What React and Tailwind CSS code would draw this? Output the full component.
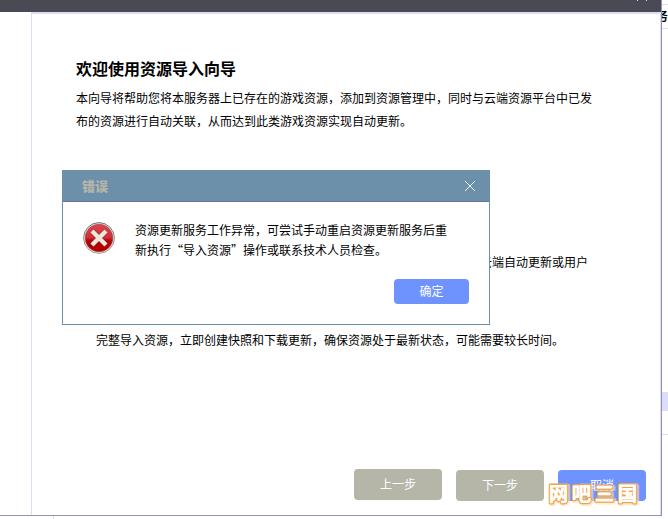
function TitleBar() {
    return (
        <div className="flex h-3 shrink-0 justify-end bg-[#4a4a55] pr-[13px]">
            <svg width="12" height="1" viewBox="0 0 12 1">
                <path d="M1 0h1v1H1zM10 0h1v1H10z" fill="#dcdcff"/>
            </svg>
        </div>
    );
}

function ErrorIcon() {
    return (
        <svg width="34" height="34" viewBox="0 0 34 34" className="shrink-0">
            <defs>
                <linearGradient id="error-fill" x1="0" y1="0" x2="0" y2="1">
                    <stop offset="0" stopColor="#d8464e"/>
                    <stop offset="0.48" stopColor="#cf2f38"/>
                    <stop offset="0.6" stopColor="#b80007"/>
                    <stop offset="1" stopColor="#b00000"/>
                </linearGradient>
                <linearGradient id="error-rim" x1="0" y1="0" x2="0" y2="1">
                    <stop offset="0" stopColor="#77716c"/>
                    <stop offset="1" stopColor="#b09c9a"/>
                </linearGradient>
            </defs>
            <circle cx="17" cy="17" r="15.4" fill="#e9e4e1" stroke="url(#error-rim)" strokeWidth="1"/>
            <circle cx="17" cy="17" r="13.8" fill="url(#error-fill)" stroke="#9c4040" strokeWidth="0.6"/>
            <path d="M10 10l14 14M24 10L10 24" stroke="#8e1515" strokeOpacity="0.6" strokeWidth="5.6"/>
            <path d="M10 10l14 14M24 10L10 24" stroke="#ece8dc" strokeWidth="4.4"/>
        </svg>
    );
}

function ErrorDialog() {
    return (
        <div className="absolute left-[62px] top-[170px] flex h-[155px] w-[428px] flex-col border border-[#6c90aa] bg-white">
            <div className="flex h-[31px] shrink-0 items-center justify-between border-b border-[#6a70a8] bg-[#6c90aa] pl-[19px] pr-[13px]">
                <h2 className="text-[13px] font-black leading-4 text-[#b5b5a8]">错误</h2>
                <svg width="12" height="12" viewBox="0 0 12 12">
                    <path d="M1 1l10 10M11 1L1 11" stroke="#fff" strokeWidth="0.9"/>
                </svg>
            </div>
            <div className="flex gap-[19px] pl-[19px] pt-[19px]">
                <ErrorIcon/>
                <p className="-mt-px whitespace-nowrap leading-5">
                    资源更新服务工作异常，可尝试手动重启资源更新服务后重<br/>
                    新执行“导入资源”操作或联系技术人员检查。
                </p>
            </div>
            <button className="mb-5 ml-auto mr-5 mt-auto h-[25px] w-[75px] rounded bg-[#6e93ff] pb-px text-white">
                确定
            </button>
        </div>
    );
}

function Watermark() {
    return (
        <svg width="100" height="32" viewBox="0 0 100 32" className="absolute left-[544px] top-[479px]">
            <g
                fontFamily='"Noto Sans CJK SC", sans-serif'
                fontSize="19"
                fontWeight="500"
                letterSpacing="4"
                strokeLinejoin="round"
            >
                <text x="6" y="23" fill="none" stroke="#ffe0b0" strokeOpacity="0.6" strokeWidth="5">网吧三国</text>
                <text x="5" y="22" fill="#fff" stroke="#eda54b" strokeWidth="3.4" paintOrder="stroke">网吧三国</text>
                <text x="5" y="22" fill="#fff" stroke="#fff" strokeWidth="0.8">网吧三国</text>
            </g>
        </svg>
    );
}

function Wizard() {
    return (
        <div className="flex h-[516px] w-[662px] shrink-0 flex-col border-b border-r border-[#9490b0]">
            <TitleBar/>
            <div className="flex grow">
                <div className="w-[31px] shrink-0"/>
                <main className="flex grow flex-col border-l border-r border-t-2 border-[#dcdcfb] pl-11 pt-[42px]">
                    <h1 className="text-base font-bold leading-6">欢迎使用资源导入向导</h1>
                    <p className="mt-[6px] whitespace-nowrap leading-[23px]">
                        本向导将帮助您将本服务器上已存在的游戏资源，添加到资源管理中，同时与云端资源平台中已发<br/>
                        布的资源进行自动关联，从而达到此类游戏资源实现自动更新。
                    </p>
                    <p className="mr-[72px] mt-[118px] text-right leading-[23px]">云端自动更新或用户</p>
                    <p className="ml-5 mt-[55px] whitespace-nowrap leading-[23px]">
                        完整导入资源，立即创建快照和下载更新，确保资源处于最新状态，可能需要较长时间。
                    </p>
                    <div className="mb-[14px] mr-[14px] mt-auto flex justify-end gap-[14px] text-white">
                        <button className="-mt-px mb-px h-[31px] w-[88px] rounded bg-[#b5b5a8] pb-px">上一步</button>
                        <button className="h-[31px] w-[88px] rounded bg-[#b5b5a8] pb-px">下一步</button>
                        <button className="h-[31px] w-[88px] rounded bg-[#6e93ff] pb-px">取消</button>
                    </div>
                </main>
            </div>
        </div>
    );
}

export default function App() {
    return (
        <div className='relative flex h-[519px] w-[668px] flex-col overflow-hidden bg-white font-["Noto_Sans_CJK_SC",sans-serif] text-xs text-black'>
            <div className="flex">
                <Wizard/>
                <aside className="w-[6px] overflow-hidden pt-1">
                    <div className="h-[25px] border-y border-[#dcdcfb]">
                        <span className="-ml-[6px] block w-3 font-bold leading-[22px]">务</span>
                    </div>
                    <div className="mt-[363px] h-[19px] bg-[#dcdcfb]"/>
                    <div className="mt-[23px] h-px bg-[#dcdcfb]"/>
                </aside>
            </div>
            <div className="ml-[53px] h-[3px] w-px bg-[#dcdcfb]"/>
            <ErrorDialog/>
            <Watermark/>
        </div>
    );
}
